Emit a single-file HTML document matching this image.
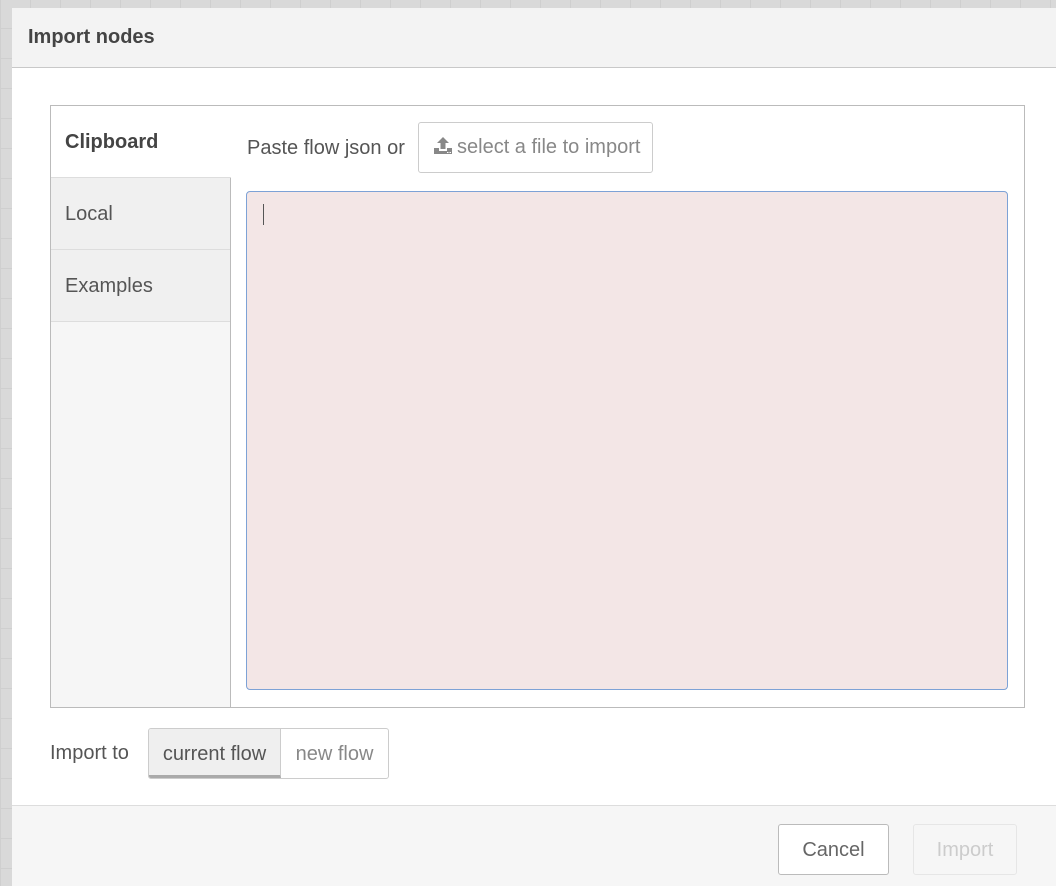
<!DOCTYPE html>
<html><head><meta charset="utf-8"><style>
*{box-sizing:border-box;margin:0;padding:0}
body{width:1056px;height:886px;overflow:hidden;font-family:"Liberation Sans",sans-serif;
background-color:#d9d9d9;background-image:linear-gradient(#cfcfcf 1px,transparent 1px),linear-gradient(90deg,#cfcfcf 1px,transparent 1px);background-size:30px 30px;background-position:0 -2px;position:relative}
.dlg{position:absolute;left:12px;top:8px;width:1044px;height:878px;background:#fff}
.title{height:60px;background:#f3f3f3;border-bottom:1px solid #c8c8c8;font-weight:bold;font-size:20px;color:#444;padding:18px 0 0 16px}
.box{position:absolute;left:38px;top:97px;width:975px;height:603px;border:1px solid #bbb}
.side{position:absolute;left:0;top:0;width:180px;height:601px;background:#f6f6f6;border-right:1px solid #bbb}
.tab{height:72px;border-bottom:1px solid #ddd;background:#f0f0f0;color:#555;font-size:20px;padding:25px 0 0 14px}
.tab.act{background:#fff;font-weight:bold;color:#444;margin-right:-1px}
.paste{position:absolute;left:196px;top:31px;font-size:20px;color:#555}
.btn{position:absolute;left:367px;top:16px;width:235px;height:51px;border:1px solid #ccc;border-radius:3px;font-size:20px;color:#888;padding:13px 0 0 14px;white-space:nowrap}
.ta{position:absolute;left:195px;top:85px;width:762px;height:499px;background:#f3e6e6;border:1px solid #7da2d6;border-radius:4px}
.ta i{position:absolute;left:16px;top:12px;width:1px;height:21px;background:#555}
.imp{position:absolute;left:38px;top:734px;font-size:20px;color:#555}
.grp{position:absolute;left:136px;top:720px;height:51px;border:1px solid #ccc;border-radius:3px;display:flex;overflow:hidden}
.grp div{font-size:20px;padding:14px 0 0;text-align:center;white-space:nowrap}
.c{background:#efefef;color:#555;border-right:1px solid #ccc;border-bottom:3px solid #aaa;width:132px}
.n{color:#888;width:107px}
.foot{position:absolute;left:0;top:797px;width:1044px;height:81px;background:#f6f6f6;border-top:1px solid #ddd}
.b{position:absolute;top:18px;height:51px;border-radius:3px;font-size:20px;padding:14px 0 0;text-align:center}
.cancel{left:766px;width:111px;background:#fff;border:1px solid #bbb;color:#666}
.ok{left:901px;width:104px;border:1px solid #e6e6e6;color:#ccc}
</style></head><body>
<div class="dlg">
<div class="title">Import nodes</div>
<div class="box">
<div class="side"><div class="tab act">Clipboard</div><div class="tab">Local</div><div class="tab">Examples</div></div>
<div class="paste">Paste flow json or</div>
<div class="btn"><svg width="20" height="19" viewBox="0 0 20 19" style="vertical-align:-2px;margin-right:4px"><path d="M10 1 L16 7 H12.5 V13 H7.5 V7 H4 Z" fill="#888"/><path d="M1 12 H6 V15 H14 V12 H19 V18 H1 Z" fill="#888"/><rect x="14" y="16" width="1.5" height="1" fill="#fff"/><rect x="16.5" y="16" width="1.5" height="1" fill="#fff"/></svg>select a file to import</div>
<div class="ta"><i></i></div>
</div>
<div class="imp">Import to</div>
<div class="grp"><div class="c">current flow</div><div class="n">new flow</div></div>
<div class="foot"><div class="b cancel">Cancel</div><div class="b ok">Import</div></div>
</div>
</body></html>
